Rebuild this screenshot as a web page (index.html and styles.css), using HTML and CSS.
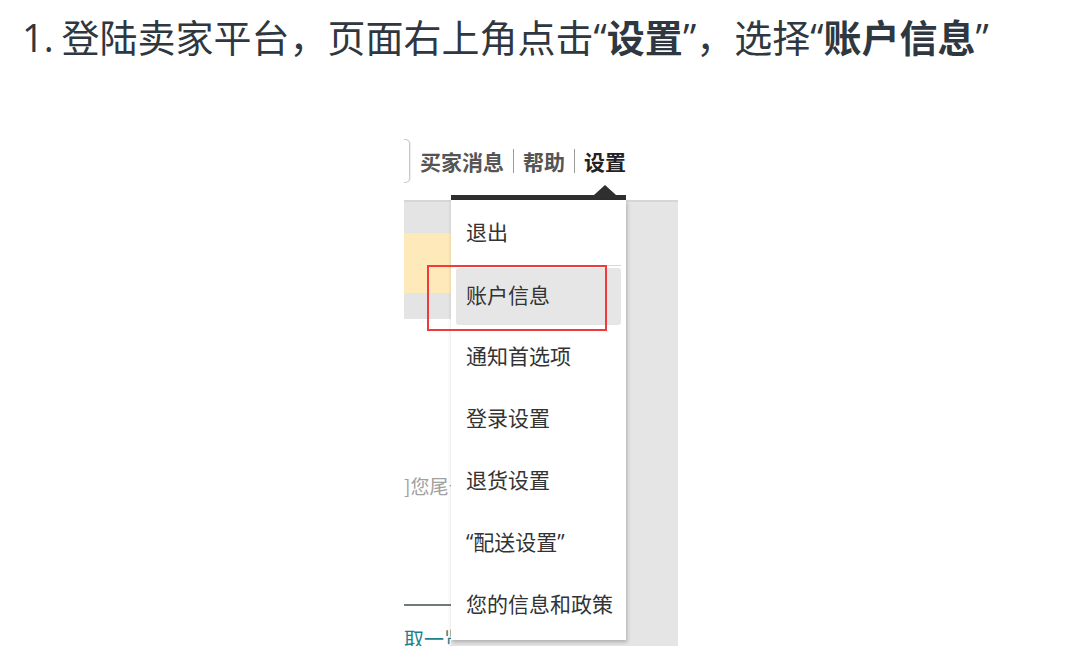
FILE: index.html
```html
<!DOCTYPE html>
<html lang="zh-CN">
<head>
<meta charset="utf-8">
<title>账户信息</title>
<link rel="stylesheet" href="styles.css">
</head>
<body>
<h1 class="title">1. 登陆卖家平台<span class="punct">，</span>页面右上角点击“<b>设置</b>”<span class="punct">，</span>选择“<b>账户信息</b>”</h1>
<div class="shot">
  <div class="nav">
    <div class="search"></div>
    <div class="links">
      <span class="nav-link">买家消息</span><i class="sep"></i><span class="nav-link">帮助</span><i class="sep"></i><span class="nav-link active">设置</span>
    </div>
  </div>
  <div class="page">
    <div class="main">
      <div class="band band-gray"></div>
      <div class="band band-yellow"></div>
      <div class="band band-gray2"></div>
      <div class="snippet">]您尾号</div>
      <div class="rule"></div>
      <div class="teal">取一览</div>
    </div>
    <div class="side"></div>
  </div>
  <div class="menu">
    <div class="caret"></div>
    <div class="menu-bar"></div>
    <ul class="menu-list">
      <li class="item first">退出</li>
      <li class="item current">账户信息</li>
      <li class="item">通知首选项</li>
      <li class="item">登录设置</li>
      <li class="item">退货设置</li>
      <li class="item">“配送设置”</li>
      <li class="item">您的信息和政策</li>
    </ul>
  </div>
  <div class="highlight-box"></div>
</div>
</body>
</html>
```
FILE: styles.css
```css
* { box-sizing: border-box; }
html, body { margin: 0; padding: 0; background: #fff; }
body {
  width: 1080px;
  height: 646px;
  overflow: hidden;
  font-family: "Open Sans", "Noto Sans CJK SC", sans-serif;
}
.title {
  margin: 0;
  padding: 13px 0 0 22px;
  font-size: 38px;
  line-height: 46px;
  font-weight: 400;
  color: #2f3740;
  white-space: nowrap;
  word-spacing: -2px;
}
.title b { font-weight: 700; }
.punct { font-family: "Noto Sans CJK TC", sans-serif; }

.shot {
  position: relative;
  margin: 76px 0 0 404px;
  width: 274px;
  height: 511px;
  overflow: hidden;
  font-family: "Noto Sans CJK SC", sans-serif;
}
.nav {
  height: 64px;
  display: flex;
  justify-content: space-between;
  align-items: flex-start;
  padding-right: 52px;
}
.search {
  margin-top: 3px;
  width: 6px;
  height: 44px;
  border: 1px solid #c9c9c9;
  border-left: none;
  border-radius: 0 5px 5px 0;
  background: #fff;
  box-shadow: 1px 0 1px rgba(0,0,0,0.08);
}
.links {
  margin-top: 14px;
  display: flex;
  align-items: center;
  height: 22px;
}
.nav-link {
  font-size: 21px;
  line-height: 22px;
  font-weight: 700;
  color: #555;
}
.nav-link.active { color: #222; }
.sep {
  display: block;
  width: 1px;
  height: 24px;
  background: #9a9a9a;
  margin: 0 9px;
}

.page {
  display: flex;
  height: 447px;
}
.main {
  width: 47px;
  display: flex;
  flex-direction: column;
  overflow: hidden;
}
.main > * { flex-shrink: 0; }
.band-gray { height: 33px; background: #e4e4e4; border-top: 2px solid #d6d6d6; }
.band-yellow { height: 60px; background: #fde9ba; }
.band-gray2 { height: 26px; background: #e4e4e4; }
.snippet {
  margin-top: 157px;
  font-size: 19px;
  line-height: 20px;
  color: #a0a0a0;
  white-space: nowrap;
}
.rule {
  margin-top: 108px;
  height: 2px;
  background: #6f7c7c;
}
.teal {
  margin-top: 22px;
  font-size: 20px;
  line-height: 22px;
  color: #1f7f8f;
  white-space: nowrap;
}
.side {
  flex: 1;
  background: #e5e5e5;
  border-top: 2px solid #d6d6d6;
}

.menu {
  position: absolute;
  left: 47px;
  top: 49px;
  width: 175px;
}
.caret {
  margin-left: 143px;
  width: 0;
  height: 0;
  border-left: 11px solid transparent;
  border-right: 11px solid transparent;
  border-bottom: 10px solid #2f2f2f;
}
.menu-bar {
  height: 5px;
  background: #2f2f2f;
}
.menu-list {
  list-style: none;
  margin: 0;
  padding: 0 5px 3px;
  background: #fff;
  box-shadow: 1px 2px 4px rgba(0,0,0,0.25);
}
.item {
  height: 62px;
  display: flex;
  align-items: center;
  padding-left: 10px;
  padding-bottom: 6px;
  font-family: "Open Sans", "Noto Sans CJK SC", sans-serif;
  font-size: 21px;
  color: #333;
  white-space: nowrap;
}
.item.first {
  height: 66px;
  padding-top: 3px;
  border-bottom: 1px solid #d8d8d8;
}
.item.current {
  height: 57px;
  margin: 2px 0;
  background: #e6e6e6;
  border-radius: 3px;
}
.highlight-box {
  position: absolute;
  left: 23px;
  top: 129px;
  width: 180px;
  height: 66px;
  border: 2px solid #f23a3d;
}
```
